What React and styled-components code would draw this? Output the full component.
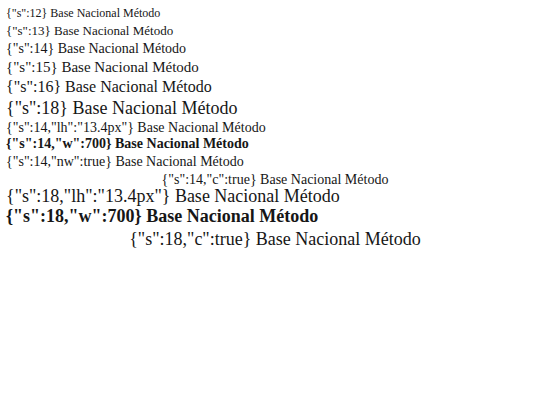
import React from "react";
import styled, { createGlobalStyle } from "styled-components";

const GlobalStyle = createGlobalStyle`
  html, body { margin: 0; padding: 0; background: #fff; }
`;

const Wrap = styled.div`
  display: flex;
  flex-direction: column;
  gap: 2px;
  padding: 6px;
`;

const Sample = styled.div`
  font-family: "Liberation Serif", serif;
  font-size: ${(p) => p.$s}px;
  line-height: ${(p) => p.$lh || "normal"};
  font-weight: ${(p) => p.$w || 400};
  white-space: ${(p) => (p.$nw ? "nowrap" : "normal")};
  text-align: ${(p) => (p.$c ? "center" : "left")};
  color: #161616;
`;

const rows = [
  { s: 12 }, { s: 13 }, { s: 14 }, { s: 15 }, { s: 16 }, { s: 18 },
  { s: 14, lh: "13.4px" }, { s: 14, w: 700 }, { s: 14, nw: true }, { s: 14, c: true },
  { s: 18, lh: "13.4px" }, { s: 18, w: 700 }, { s: 18, c: true },
];

export default function App() {
  return (
    <>
      <GlobalStyle />
      <Wrap>
        {rows.map((r, i) => (
          <Sample key={i} $s={r.s} $lh={r.lh} $w={r.w} $nw={r.nw} $c={r.c}>
            {JSON.stringify(r)} Base Nacional Método
          </Sample>
        ))}
      </Wrap>
    </>
  );
}
